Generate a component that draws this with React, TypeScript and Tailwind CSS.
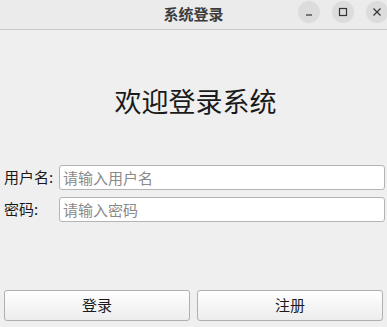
import React from "react";

const FONT = { fontFamily: '"Noto Sans CJK SC", "Noto Sans", sans-serif' };

function TitleButton({ children }: { children: React.ReactNode }) {
  return (
    <div className="w-[22px] h-[22px] rounded-full bg-[#dcdcdc] flex items-center justify-center text-[#333]">
      {children}
    </div>
  );
}

export default function App() {
  return (
    <div className="w-[387px] h-[327px] flex flex-col bg-[#efefef] overflow-hidden" style={FONT}>
      {/* Title bar */}
      <div className="relative h-[30px] shrink-0 bg-[#ebebeb] border-b border-[#c8c8c8] flex items-center justify-center">
        <span className="text-[15px] font-bold text-[#3c3c3c] leading-none -mt-[3px]">系统登录</span>
        <div className="absolute right-[-1px] top-[1px] flex gap-[12px]">
          <TitleButton>
            <svg width="10" height="10" viewBox="0 0 10 10">
              <path d="M2 8h6" stroke="currentColor" strokeWidth="1.2" />
            </svg>
          </TitleButton>
          <TitleButton>
            <svg width="10" height="10" viewBox="0 0 10 10">
              <rect x="1.5" y="1.5" width="7" height="7" fill="none" stroke="currentColor" strokeWidth="1.2" />
            </svg>
          </TitleButton>
          <TitleButton>
            <svg width="10" height="10" viewBox="0 0 10 10">
              <path d="M1.5 1.5l7 7M8.5 1.5l-7 7" stroke="currentColor" strokeWidth="1.2" />
            </svg>
          </TitleButton>
        </div>
      </div>

      {/* Body */}
      <div className="flex-1 flex flex-col px-[4px]">
        <h1 className="mt-[53px] text-center text-[27px] leading-[36px] text-[#1a1a1a] pl-[4px]">欢迎登录系统</h1>

        <div className="mt-[46px] flex flex-col gap-[7px]">
          <div className="flex items-center">
            <label className="w-[55px] text-[15px] text-[#1a1a1a]">用户名:</label>
            <input
              className="flex-1 h-[25px] mr-[-2px] rounded-[3px] border border-[#b4b4b4] bg-white px-[3px] text-[15px] outline-none placeholder:text-[#8a8a8a]"
              placeholder="请输入用户名"
            />
          </div>
          <div className="flex items-center">
            <label className="w-[55px] text-[15px] text-[#1a1a1a]">密码:</label>
            <input
              type="password"
              className="flex-1 h-[25px] mr-[-2px] rounded-[3px] border border-[#b4b4b4] bg-white px-[3px] text-[15px] outline-none placeholder:text-[#8a8a8a]"
              placeholder="请输入密码"
            />
          </div>
        </div>

        <div className="mt-auto mb-[6px] flex gap-[7px]">
          <button className="flex-1 h-[31px] rounded-[3px] border border-[#b0b0b0] bg-gradient-to-b from-white to-[#ececec] text-[15px] text-[#1a1a1a]">
            登录
          </button>
          <button className="flex-1 h-[31px] rounded-[3px] border border-[#b0b0b0] bg-gradient-to-b from-white to-[#ececec] text-[15px] text-[#1a1a1a]">
            注册
          </button>
        </div>
      </div>
    </div>
  );
}
